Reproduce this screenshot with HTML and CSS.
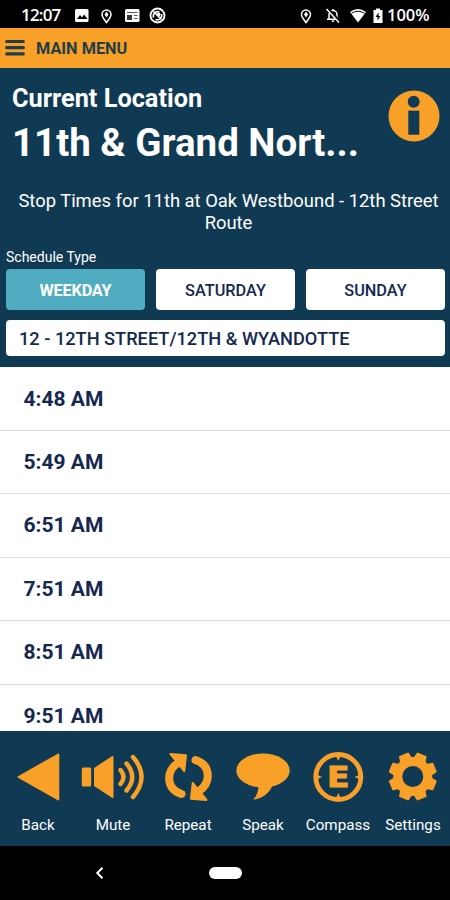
FILE: index.html
```html
<!DOCTYPE html>
<html lang="en">
<head>
    <meta charset="UTF-8">
    <meta name="viewport" content="width=device-width, initial-scale=1.0">
    <title>Stop Times</title>
    <link rel="stylesheet" href="styles.css">
</head>
<body>
    <div class="screen">
        <div class="status-bar">
            <span class="clock">12:07</span>
            <svg class="status-left" width="94" height="20" viewBox="0 0 94 20">
                <rect x="1" y="4" width="13.500" height="13" rx="1.500" fill="#fff"/>
                <path d="M3 14l3-4 2 2.500 2-3 3.500 4.500z" fill="#000"/>
                <path d="M32.500 17.500c-2.500-3.500-4.500-5.500-4.500-8a4.500 4.500 0 0 1 9 0c0 2.500-2 4.500-4.500 8z" fill="none" stroke="#fff" stroke-width="1.500"/>
                <path d="M32.500 6.500l2 3-2 3-2-3z" fill="#fff"/>
                <rect x="51" y="4" width="14.500" height="13" rx="1.500" fill="#fff"/>
                <path d="M53 7.500h10.500M60 10.500h3.500M60 13.500h3.500" stroke="#555" stroke-width="1.200"/>
                <rect x="53" y="10" width="5" height="5" fill="#333"/>
                <circle cx="83.500" cy="10.500" r="7" fill="none" stroke="#fff" stroke-width="1.800"/>
                <path d="M79.500 12.500a4.500 4.500 0 0 1 6-5.500M87.500 9a4.500 4.500 0 0 1-6 5.500M79.500 6.500l8 8" fill="none" stroke="#fff" stroke-width="1.600"/>
                <circle cx="84.500" cy="9.500" r="2" fill="#fff"/>
            </svg>
            <svg class="status-right" width="86" height="20" viewBox="0 0 86 20">
                <path d="M6 17.500c-2.500-3.500-4.500-5.500-4.500-8a4.500 4.500 0 0 1 9 0c0 2.500-2 4.500-4.500 8z" fill="none" stroke="#fff" stroke-width="1.500"/>
                <path d="M6 6.500l2 3-2 3-2-3z" fill="#fff"/>
                <path d="M29 14V9.500a4 4 0 0 1 8 0V14M27 14.300h12M33 4v2" fill="none" stroke="#fff" stroke-width="1.500"/>
                <path d="M31.500 15.500h3a1.500 1.500 0 0 1-3 0z" fill="#fff"/>
                <path d="M27.500 3.500l12 13" stroke="#000" stroke-width="3"/>
                <path d="M26.500 4l12.500 13.500" stroke="#fff" stroke-width="1.500"/>
                <path d="M50 7q8-6 16 0l-8 10.500z" fill="#fff"/>
                <path d="M51.500 8.300q6.500-4.200 13 0" fill="none" stroke="#000" stroke-width="1"/>
                <path d="M73.500 5h2.500V3.500h4V5h2.500v13h-9z" fill="#fff"/>
                <path d="M78.500 7.500l-3 4.500h2v3.500l3-4.500h-2z" fill="#000"/>
            </svg>
            <span class="battery">100%</span>
        </div>

        <div class="menu-bar">
            <svg width="20" height="18" viewBox="0 0 20 18">
                <path d="M1.700 2.500h16.600M1.700 8.700h16.600M1.700 14.900h16.600" stroke="#1f3d48" stroke-width="3.200" stroke-linecap="round"/>
            </svg>
            <span class="menu-title">MAIN MENU</span>
        </div>

        <div class="header">
            <div class="location">
                <div class="location-text">
                    <div class="location-label">Current Location</div>
                    <div class="location-name">11th &amp; Grand Nort...</div>
                </div>
                <svg class="info-icon" width="52" height="52" viewBox="0 0 52 52">
                    <circle cx="26" cy="26" r="25.500" fill="#f9a028"/>
                    <circle cx="25.700" cy="11.700" r="6" fill="#103a54"/>
                    <rect x="20.300" y="20.700" width="11" height="24" fill="#103a54"/>
                </svg>
            </div>
            <div class="stop-title">Stop Times for 11th at Oak Westbound - 12th Street Route</div>
            <div class="schedule-label">Schedule Type</div>
            <div class="schedule-types">
                <button class="schedule-button active">WEEKDAY</button>
                <button class="schedule-button">SATURDAY</button>
                <button class="schedule-button">SUNDAY</button>
            </div>
            <div class="route-select">12 - 12TH STREET/12TH &amp; WYANDOTTE</div>
        </div>

        <div class="times">
            <div class="time">4:48 AM</div>
            <div class="time">5:49 AM</div>
            <div class="time">6:51 AM</div>
            <div class="time">7:51 AM</div>
            <div class="time">8:51 AM</div>
            <div class="time">9:51 AM</div>
        </div>

        <div class="toolbar">
            <div class="tool">
                <svg viewBox="0 0 75 56">
                    <path d="M18.500 28L58.300 5.500v45z" stroke-width="2" stroke-linejoin="round"/>
                </svg>
                <span>Back</span>
            </div>
            <div class="tool">
                <svg viewBox="0 0 75 56">
                    <rect x="6.800" y="18.500" width="9.400" height="19" rx="1.500" stroke="none"/>
                    <path d="M20 19.500L37.500 8v40L20 36.500z" stroke-width="2" stroke-linejoin="round"/>
                    <path d="M45.500 21q6 7 0 14M51.500 14.500q11.500 13.500 0 27M58 8q17 20 0 40" fill="none" stroke-width="4.400" stroke-linecap="round"/>
                </svg>
                <span>Mute</span>
            </div>
            <div class="tool">
                <svg viewBox="0 0 75 56">
                    <g id="arrow">
                        <path d="M31.500 45C15.500 39.500 16 22 28 14" fill="none" stroke-width="8" stroke-linecap="round"/>
                        <path d="M20.500 5l15.500 1.200-1.700 15.800z" stroke-width="2" stroke-linejoin="round"/>
                    </g>
                    <use href="#arrow" transform="rotate(180 38.500 28)"/>
                </svg>
                <span>Repeat</span>
            </div>
            <div class="tool">
                <svg viewBox="0 0 75 56">
                    <ellipse cx="38" cy="21.500" rx="26.700" ry="17" stroke="none"/>
                    <path d="M34 36q0 9-5 14.200 14-2.200 18.500-14.700z" stroke-width="1" stroke-linejoin="round"/>
                </svg>
                <span>Speak</span>
            </div>
            <div class="tool">
                <svg viewBox="0 0 75 56">
                    <circle cx="38.300" cy="28" r="22.500" fill="none" stroke-width="4.800"/>
                    <path d="M36 7h4.600l-2.300 5zM36 49h4.600l-2.300-5zM17 25.700v4.600l5-2.300zM59.600 25.700v4.600l-5-2.300z" stroke="none"/>
                    <text class="compass-letter" x="27" y="38.300" textLength="22.500" lengthAdjust="spacingAndGlyphs">E</text>
                </svg>
                <span>Compass</span>
            </div>
            <div class="tool">
                <svg viewBox="0 0 75 56">
                    <circle cx="37.800" cy="27.500" r="15" fill="none" stroke-width="9"/>
                    <g stroke-width="2" stroke-linejoin="round">
                        <path id="tooth" d="M32.300 11l1.200-6.500h8.600l1.200 6.500z" transform="rotate(22.500 37.800 27.500)"/>
                        <use href="#tooth" transform="rotate(45 37.800 27.500)"/>
                        <use href="#tooth" transform="rotate(90 37.800 27.500)"/>
                        <use href="#tooth" transform="rotate(135 37.800 27.500)"/>
                        <use href="#tooth" transform="rotate(180 37.800 27.500)"/>
                        <use href="#tooth" transform="rotate(225 37.800 27.500)"/>
                        <use href="#tooth" transform="rotate(270 37.800 27.500)"/>
                        <use href="#tooth" transform="rotate(315 37.800 27.500)"/>
                    </g>
                </svg>
                <span>Settings</span>
            </div>
        </div>

        <div class="nav-bar">
            <svg width="10" height="14" viewBox="0 0 10 14">
                <path d="M7.500 1.800L2.300 7l5.200 5.200" fill="none" stroke="#fff" stroke-width="2"/>
            </svg>
            <div class="home-pill"></div>
        </div>
    </div>
</body>
</html>
```

FILE: styles.css
```css
:root {
    --navy: #103a54;
    --orange: #f9a028;
    --teal: #50adc1;
    --ink: #142850;
}

* {
    margin: 0;
    padding: 0;
    box-sizing: border-box;
}

body {
    font-family: Roboto, sans-serif;
    background: #000;
}

.screen {
    width: 450px;
    height: 900px;
    display: flex;
    flex-direction: column;
    overflow: hidden;
}

.status-bar {
    height: 28px;
    padding: 1px 20px 0 21px;
    display: flex;
    align-items: center;
    background: #000;
    color: #fff;
    font-family: "Open Sans", sans-serif;
    font-size: 17px;
    font-weight: 600;
    white-space: nowrap;
}

.clock {
    width: 53px;
    letter-spacing: -0.8px;
}

.status-right {
    margin-left: auto;
}

.battery {
    width: 43px;
    margin-left: 1px;
    font-size: 16.5px;
}

.menu-bar {
    height: 40px;
    padding-left: 5px;
    display: flex;
    align-items: center;
    gap: 11px;
    background: var(--orange);
}

.menu-title {
    color: #1f3d48;
    font-size: 16.3px;
    font-weight: 700;
}

.header {
    height: 299px;
    padding: 14px 5px 0 6px;
    background: var(--navy);
    color: #fff;
}

.location {
    height: 103px;
    display: flex;
    justify-content: space-between;
    padding: 0 5px 0 6px;
}

.location-label {
    padding-top: 1px;
    font-size: 25.3px;
    font-weight: 700;
    line-height: 32px;
}

.location-name {
    font-size: 38.5px;
    font-weight: 700;
    line-height: 55px;
    white-space: nowrap;
}

.info-icon {
    margin-top: 8px;
}

.stop-title {
    height: 64px;
    padding: 5px 0 0 6px;
    font-size: 18.4px;
    line-height: 21.5px;
    text-align: center;
}

.schedule-label {
    height: 20px;
    font-size: 14px;
    line-height: 16px;
}

.schedule-types {
    display: grid;
    grid-template-columns: repeat(3, 1fr);
    gap: 11px;
}

.schedule-button {
    height: 41px;
    border: none;
    border-radius: 4px;
    background: #fff;
    color: var(--ink);
    font: 500 16.3px/43px Roboto, sans-serif;
}

.schedule-button.active {
    background: var(--teal);
    color: #fff;
    font-weight: 700;
    letter-spacing: -0.2px;
}

.route-select {
    height: 36px;
    margin-top: 10px;
    padding-left: 13px;
    border-radius: 4px;
    background: #fff;
    color: var(--ink);
    font-size: 18.2px;
    font-weight: 500;
    line-height: 38px;
}

.times {
    height: 364px;
    padding-top: 0.6px;
    background: #fff;
    overflow: hidden;
}

.time {
    height: 63.4px;
    padding-left: 23.5px;
    border-bottom: 1px solid #dedee1;
    color: var(--ink);
    font-size: 21px;
    font-weight: 700;
    line-height: 63.6px;
}

.toolbar {
    height: 115px;
    padding-top: 18px;
    display: grid;
    grid-template-columns: repeat(6, 75px);
    background: var(--navy);
}

.tool {
    display: flex;
    flex-direction: column;
    align-items: center;
    color: #fff;
    font-size: 15.2px;
    line-height: 20px;
}

.tool span {
    padding-left: 1px;
}

.tool svg {
    width: 75px;
    height: 56px;
    margin-bottom: 10px;
    fill: var(--orange);
    stroke: var(--orange);
}

.compass-letter {
    font-family: "DejaVu Sans", sans-serif;
    font-size: 28px;
    font-weight: 700;
}

.nav-bar {
    height: 54px;
    padding-left: 95px;
    display: flex;
    align-items: center;
    gap: 104px;
    background: #000;
}

.home-pill {
    width: 33px;
    height: 12px;
    border-radius: 6px;
    background: #fff;
}
```
